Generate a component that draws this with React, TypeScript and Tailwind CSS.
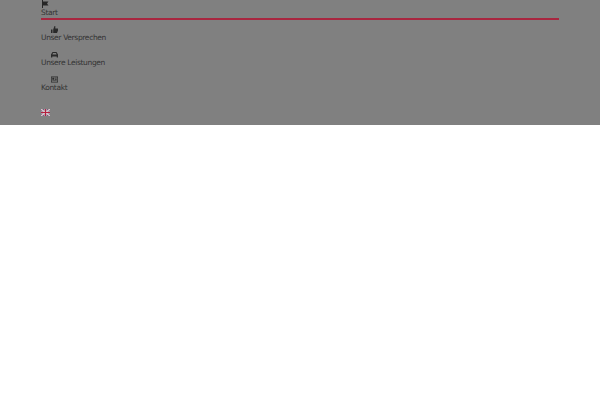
import React from 'react';

interface NavItem {
  label: string;
  icon: React.ReactNode;
}

const navItems: NavItem[] = [
  {
    label: 'Unser Versprechen',
    icon: <path d="M0 3.5h1.5V7H0zM2.2 3.5 3.5 0h.8v2.5H7V4.5L6 7H2.2z" />,
  },
  {
    label: 'Unsere Leistungen',
    icon: <path d="M1.5 1h4L7 3.5V6.5H5.7V5.5H1.3v1H0V3.5zM2 2 1.4 3.5h4.2L5 2z" fillRule="evenodd" />,
  },
  {
    label: 'Kontakt',
    icon: <path d="M0 .5h7v6H0zM.7 1.2v4.6h5.6V1.2zM1.3 1.8h2v2h-2zM4 1.8h1.7v.7H4zM4 3.2h1.7v.7H4zM1.3 4.5h4.4v.6H1.3z" fillRule="evenodd" />,
  },
];

const App: React.FC = () => {
  return (
    <div className="min-h-[400px] bg-white font-['DejaVu_Sans',sans-serif]">
      <nav className="h-[125px] bg-[#808080] px-[41px] text-[7.5px] leading-[9px] tracking-[-0.35px] text-[#333333]">
        {/* Active item */}
        <div className="h-[20px] border-b-2 border-[#a8263f]">
          <svg className="ml-[1px] block" width="7" height="8" viewBox="0 0 7 8" fill="#262626">
            <path d="M0 0h1v8H0zM1 1.5h5.5L5 3.5 6.5 5.5H1z" />
          </svg>
          <div>Start</div>
        </div>

        {navItems.map(({ label, icon }) => (
          <div key={label} className="mt-[6px] h-[19px]">
            <svg className="ml-[10px] mt-[1px] block" width="7" height="7" viewBox="0 0 7 7" fill="#2a2a2a">
              {icon}
            </svg>
            <div>{label}</div>
          </div>
        ))}

        {/* Language flag */}
        <svg className="mt-[14px] block" width="9" height="7" viewBox="0 0 9 7">
          <rect width="9" height="7" fill="#6b5a78" />
          <path d="M0 0L9 7M9 0L0 7" stroke="#d8c6ce" strokeWidth="1.4" />
          <path d="M4.5 0V7M0 3.5H9" stroke="#d8d0d4" strokeWidth="2.2" />
          <path d="M4.5 0V7M0 3.5H9" stroke="#b5203f" strokeWidth="1.2" />
        </svg>
      </nav>
    </div>
  );
};

export default App;
